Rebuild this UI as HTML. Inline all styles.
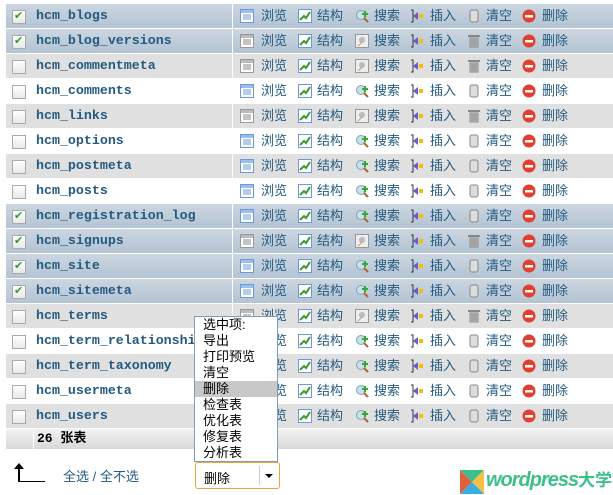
<!DOCTYPE html>
<html><head><meta charset="utf-8"><style>
body{margin:0;width:613px;height:495px;background:#fff;position:relative;overflow:hidden;font-family:"Liberation Sans","Noto Sans CJK SC",sans-serif;font-size:12px}
.row{position:absolute;left:6px;width:607px;height:24px}
.g{background:#e0e0e0}.w{background:#fff}.c{background:linear-gradient(#ccd6e0,#b4c4d4)}
.sep{position:absolute;left:226px;top:0;width:1px;height:24px;background:#fff}
.cb{position:absolute;left:6px;top:6px;width:12px;height:12px;border:1px solid #aaa;background:linear-gradient(#fff,#e8e8e8)}
.cb.k::after{content:"✔";position:absolute;left:1px;top:-2px;color:#3a9a2a;font-size:11px}
.nm{position:absolute;left:30px;top:0;line-height:24px;font-family:"Liberation Mono",monospace;font-weight:bold;font-size:13.3px;color:#235a81;white-space:nowrap}
.ac{position:absolute;left:231px;top:0;height:24px;width:380px}
.ac span{position:absolute;top:0;line-height:24px;color:#235a81;font-size:13px}
.ic{position:absolute;top:5px;width:14px;height:14px}
.ft{position:absolute;left:6px;top:429px;width:607px;height:20px;background:linear-gradient(#f2f2f2,#d8d8d8)}
.dd{position:absolute;left:194px;top:316px;width:82px;height:144px;border:1px solid #7f9db9;background:#fff;font-size:13px;color:#000}
.dd div{height:16px;line-height:16px;padding-left:8px}
</style></head><body>
<div id="rows"></div>
<div class="ft"><div style="position:absolute;left:27px;top:0;width:1px;height:20px;background:#fff"></div><div style="position:absolute;left:226px;top:0;width:1px;height:20px;background:#fff"></div><span style="position:absolute;left:31px;top:0;line-height:20px;font-weight:bold;font-family:'Liberation Mono','Noto Sans CJK SC',monospace;font-size:13px">26 张表</span></div>
<div style="position:absolute;left:18px;top:467px;width:2px;height:15px;background:#000"></div>
<div style="position:absolute;left:18px;top:481px;width:27px;height:1px;background:#000"></div>
<div style="position:absolute;left:14px;top:463px;width:0;height:0;border-left:5px solid transparent;border-right:5px solid transparent;border-bottom:6px solid #000"></div>
<div style="position:absolute;left:63px;top:466px;color:#235a81;font-size:13px;white-space:nowrap">全选 / 全不选</div>
<div class="dd"><div>选中项:</div><div>导出</div><div>打印预览</div><div>清空</div><div style="background:#c8c8c8">删除</div><div>检查表</div><div>优化表</div><div>修复表</div><div>分析表</div></div>
<div style="position:absolute;left:195px;top:462px;width:83px;height:25px;border:1px solid #e8a33d;border-radius:3px;background:#fff"><span style="position:absolute;left:8px;top:5px;font-size:13px">删除</span><div style="position:absolute;left:63px;top:3px;width:1px;height:19px;background:#ccc"></div><div style="position:absolute;left:69px;top:11px;border-left:4px solid transparent;border-right:4px solid transparent;border-top:4px solid #000"></div></div>
<svg style="position:absolute;left:460px;top:470px" width="24" height="24"><polygon points="0,0 24,0 12,12" fill="#3cbf8a"/><polygon points="0,0 12,12 0,24" fill="#e0603c"/><polygon points="24,0 24,24 12,12" fill="#f5c04a"/><polygon points="0,24 24,24 12,12" fill="#3aaee0"/></svg>
<div style="position:absolute;left:486px;top:468px;color:#3cbf8a;font-size:20px;line-height:24px;font-weight:bold;font-style:italic;letter-spacing:-1px;white-space:nowrap">wordpress<span style="font-style:normal;font-size:17px;letter-spacing:0">大学</span></div>
<script>
var n=["hcm_blogs","hcm_blog_versions","hcm_commentmeta","hcm_comments","hcm_links","hcm_options","hcm_postmeta","hcm_posts","hcm_registration_log","hcm_signups","hcm_site","hcm_sitemeta","hcm_terms","hcm_term_relationships","hcm_term_taxonomy","hcm_usermeta","hcm_users"];
var t="ccgwgwgwccccgwgwg",full="1001011110110111";
var h="";
for(var i=0;i<17;i++){var k=t[i]=="c",f=(full[i]||"1")=="1"&&i!=1&&i!=2&&i!=4;
var y=4+i*25;
var br=f?'<svg class="ic" style="left:3px"><rect x="0.5" y="0.5" width="13" height="13" fill="#fff" stroke="#6c9ad8"/><rect x="1" y="1" width="12" height="3" fill="#9cc0ec"/><path d="M3 6h8M3 8h8M3 10h8" stroke="#6c9ad8"/></svg>':'<svg class="ic" style="left:3px"><rect x="0.5" y="0.5" width="13" height="13" fill="#fff" stroke="#999"/><rect x="1" y="1" width="12" height="3" fill="#bbb"/><path d="M3 6h8M3 8h8M3 10h8" stroke="#888"/></svg>';
var se=f?'<svg class="ic" style="left:118px"><circle cx="6" cy="6" r="4.5" fill="#cde" stroke="#7aa"/><path d="M9 9l4 4" stroke="#a63" stroke-width="2"/><path d="M10 2v6M7 5h6" stroke="#3a3" stroke-width="2"/></svg>':'<svg class="ic" style="left:118px"><rect x="0.5" y="0.5" width="13" height="13" fill="#eee" stroke="#999"/><circle cx="7" cy="6" r="3" fill="#bbb"/><path d="M3 12l4-4" stroke="#c96"/></svg>';
var em=f?'<svg class="ic" style="left:230px"><rect x="3" y="1" width="8" height="12" rx="2" fill="#ddd" stroke="#888"/></svg>':'<svg class="ic" style="left:230px"><rect x="1" y="1" width="12" height="2" fill="#888"/><path d="M3 4h8v9H3z" fill="#ccc" stroke="#888"/><path d="M5 5v7M7 5v7M9 5v7" stroke="#777"/></svg>';
h+='<div class="row '+t[i]+'" style="top:'+y+'px"><div class="sep"></div><div class="cb'+(k?' k':'')+'"></div><div class="nm">'+n[i]+'</div><div class="ac">'+br+'<span style="left:24px">浏览</span>'+
'<svg class="ic" style="left:61px"><rect x="0.5" y="0.5" width="13" height="13" fill="#fff" stroke="#6c9ad8"/><path d="M2 11l4-4 2 2 4-6" stroke="#3a9a2a" stroke-width="2" fill="none"/></svg><span style="left:80px">结构</span>'+se+'<span style="left:137px">搜索</span>'+
'<svg class="ic" style="left:173px"><path d="M1 1h2v12H1" stroke="#333" fill="none"/><path d="M3 7l5-4v8z" fill="#6a5acd"/><rect x="9" y="5" width="4" height="4" fill="#f5c000"/></svg><span style="left:193px">插入</span>'+em+'<span style="left:249px">清空</span>'+
'<svg class="ic" style="left:285px"><circle cx="7" cy="7" r="6.5" fill="#e04030"/><rect x="3" y="6" width="8" height="2.5" fill="#fff"/></svg><span style="left:305px">删除</span></div></div>';}
document.getElementById("rows").innerHTML=h;
</script>
</body></html>
